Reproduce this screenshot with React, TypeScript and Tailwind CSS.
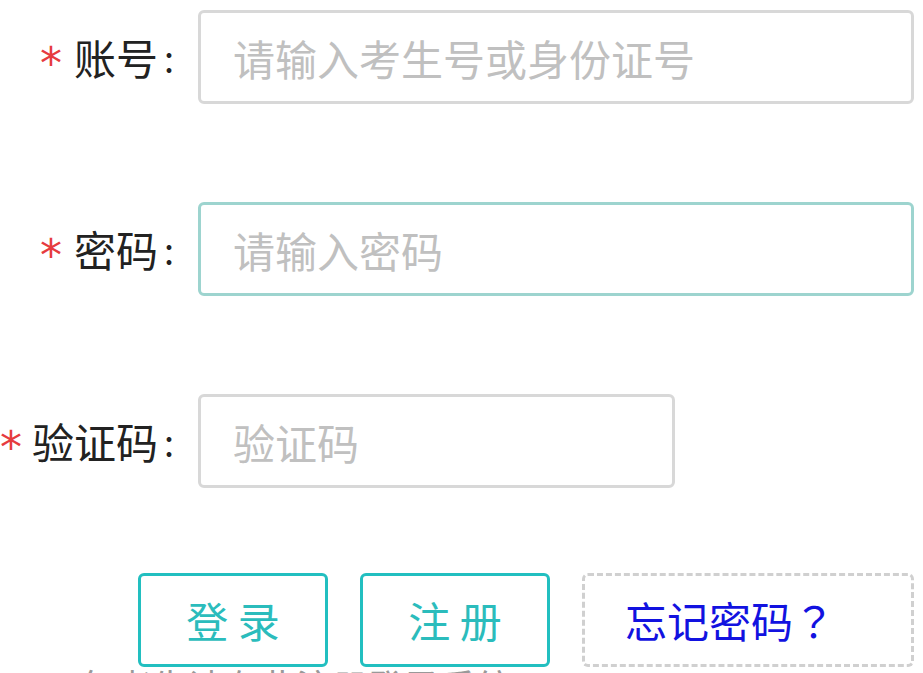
import React from "react";

function Label({ text, starGap }: { text: string; starGap: string }) {
  return (
    <div className="w-[180px] shrink-0 flex justify-end items-center whitespace-nowrap pr-[6px] text-[42px] leading-none text-[#222]">
      <span className={`text-[#e63b3f] text-[44px] font-['DejaVu_Sans',sans-serif] ${starGap} mt-[14px]`}>*</span>
      <span>{text}</span>
      <span className="ml-[6px] text-[36px]">:</span>
    </div>
  );
}

function Row({ label, placeholder, width, focused }: { label: string; placeholder: string; width: string; focused?: boolean }) {
  return (
    <div className="flex items-center h-[94px]">
      <Label text={label} starGap="mr-[12px]" />
      <input
        className={`ml-[18px] h-[94px] ${width} rounded-[6px] border-[3px] ${focused ? "border-[#9dd4cf]" : "border-[#d8d8d8]"} bg-white pl-[32px] text-[42px] font-['Noto_Sans_CJK_SC',sans-serif] outline-none placeholder:text-[#c0c0c0]`}
        placeholder={placeholder}
      />
    </div>
  );
}

export default function App() {
  return (
    <div className="w-[923px] h-[673px] overflow-hidden bg-white font-['Noto_Sans_CJK_SC',sans-serif]">
      <div className="flex flex-col pt-[10px] gap-[98px]">
        <Row label="账号" placeholder="请输入考生号或身份证号" width="w-[716px]" />
        <Row label="密码" placeholder="请输入密码" width="w-[716px]" focused />
        <div className="flex items-center h-[94px]">
          <Label text="验证码" starGap="mr-[10px]" />
          <input
            className="ml-[18px] h-[94px] w-[477px] rounded-[6px] border-[3px] border-[#d8d8d8] bg-white pl-[32px] text-[42px] font-['Noto_Sans_CJK_SC',sans-serif] outline-none placeholder:text-[#c0c0c0]"
            placeholder="验证码"
          />
        </div>
      </div>
      <div className="flex mt-[85px] ml-[138px] gap-[32px]">
        <button className="w-[190px] h-[94px] rounded-[6px] border-[3px] border-[#22bfc0] text-[#2bbcbc] text-[42px] leading-none font-['Noto_Sans_CJK_SC',sans-serif]">登 录</button>
        <button className="w-[190px] h-[94px] rounded-[6px] border-[3px] border-[#22bfc0] text-[#2bbcbc] text-[42px] leading-none font-['Noto_Sans_CJK_SC',sans-serif]">注 册</button>
        <button className="w-[332px] h-[94px] rounded-[6px] border-[3px] border-dashed border-[#d0d0d0] text-[#1212e0] text-[42px] leading-none pr-[36px] font-['Noto_Sans_CJK_SC',sans-serif]">
          忘记密码<span className="font-['Noto_Sans_CJK_TC',sans-serif]">？</span>
        </button>
      </div>
      <div className="text-[36px] leading-none text-[#999] whitespace-nowrap">2022年考生请在此注册登录系统</div>
    </div>
  );
}
